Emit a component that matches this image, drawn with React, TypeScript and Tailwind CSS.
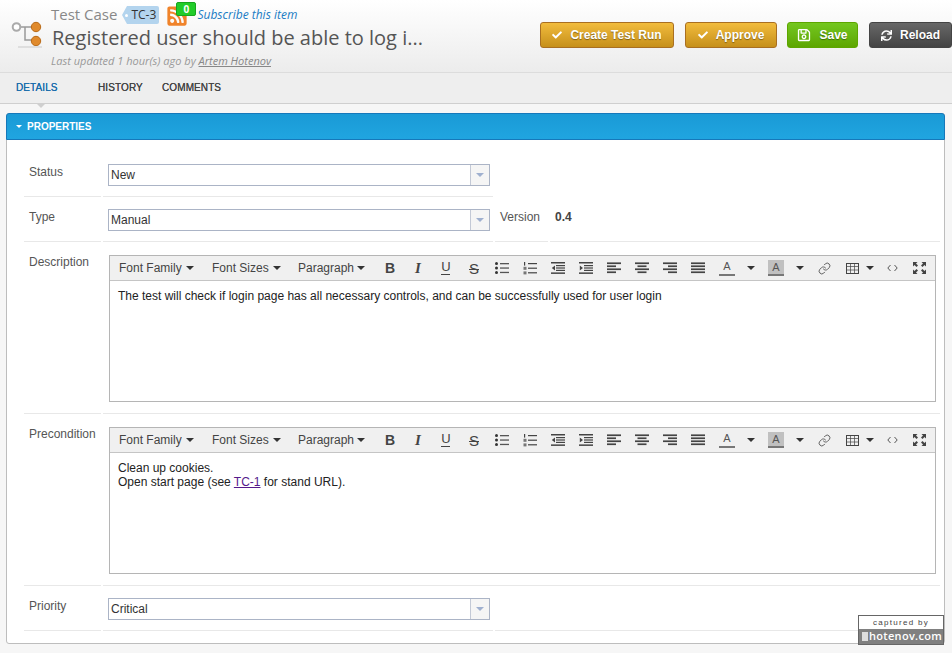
import { FaRssSquare, FaCheck, FaRegSave, FaSync } from "react-icons/fa";
import { LuLink } from "react-icons/lu";

const sans = "font-['Liberation_Sans',Arial,sans-serif]";
const open = "font-['Open_Sans',sans-serif]";

function Lines({ rows }: { rows: number[][] }) {
  // each row: x, width - a tiny text-alignment glyph
  return (
    <svg width="14" height="12" viewBox="0 0 14 12" fill="#444">
      {rows.map((r, i) => (
        <rect key={i} x={r[0]} y={i * (12 / rows.length) + 0.4} width={r[1]} height="1.7" />
      ))}
    </svg>
  );
}

function Caret({ className = "" }: { className?: string }) {
  return (
    <span
      className={`inline-block w-0 h-0 border-x-[4px] border-x-transparent border-t-[4px] border-t-[#333] ${className}`}
    />
  );
}

function Tool({ children, w = "w-[28px]" }: { children: React.ReactNode; w?: string }) {
  return <div className={`${w} flex items-center justify-center shrink-0`}>{children}</div>;
}

function Toolbar() {
  return (
    <div className={`flex items-center h-[25px] bg-[#f0f0f0] border-b border-[#c5c5c5] text-[12px] text-[#444] ${sans}`}>
      <div className="w-[101px] pl-[9px] flex items-center shrink-0">
        Font Family <Caret className="ml-[4px]" />
      </div>
      <div className="w-[87px] pl-[1px] flex items-center shrink-0">
        Font Sizes <Caret className="ml-[4px]" />
      </div>
      <div className="w-[78px] flex items-center shrink-0">
        Paragraph <Caret className="ml-[3px]" />
      </div>
      <Tool><span className="font-bold text-[14px] leading-none text-[#444]">B</span></Tool>
      <Tool><span className="italic font-bold text-[15px] leading-none font-['Liberation_Serif',serif] text-[#444]">I</span></Tool>
      <Tool>
        <span className="flex flex-col items-center text-[13px] leading-[12px]">
          U<span className="block w-[9px] h-[1px] bg-[#444] mt-[1px]" />
        </span>
      </Tool>
      <Tool><span className="line-through text-[15px] leading-none">S</span></Tool>
      <Tool>
        <svg width="14" height="12" viewBox="0 0 14 12" fill="#333">
          <circle cx="1.5" cy="1.5" r="1.5" />
          <circle cx="1.5" cy="6" r="1.5" />
          <circle cx="1.5" cy="10.5" r="1.5" />
          <rect x="5" y="1" width="9" height="1.3" fill="#555" />
          <rect x="5" y="5.4" width="9" height="1.3" fill="#555" />
          <rect x="5" y="9.8" width="9" height="1.3" fill="#555" />
        </svg>
      </Tool>
      <Tool>
        <svg width="14" height="13" viewBox="0 0 14 13" fill="#444">
          <rect x="1" y="0" width="1.2" height="3.6" />
          <rect x="0.5" y="4.8" width="3" height="3" fill="#777" />
          <rect x="0.5" y="9.4" width="3" height="3" fill="#777" />
          <rect x="5" y="1" width="9" height="1.2" />
          <rect x="5" y="5.6" width="9" height="1.2" />
          <rect x="5" y="10.2" width="9" height="1.2" />
        </svg>
      </Tool>
      <Tool>
        <svg width="14" height="12" viewBox="0 0 14 12" fill="#444">
          <rect x="0" y="0" width="14" height="1.5" />
          <rect x="5" y="3" width="9" height="1.2" />
          <rect x="5" y="5.4" width="9" height="1.2" />
          <rect x="5" y="7.8" width="9" height="1.2" />
          <rect x="0" y="10.4" width="14" height="1.5" />
          <path d="M4 3.6v4.8L0.8 6z" />
        </svg>
      </Tool>
      <Tool>
        <svg width="14" height="12" viewBox="0 0 14 12" fill="#444">
          <rect x="0" y="0" width="14" height="1.5" />
          <rect x="5" y="3" width="9" height="1.2" />
          <rect x="5" y="5.4" width="9" height="1.2" />
          <rect x="5" y="7.8" width="9" height="1.2" />
          <rect x="0" y="10.4" width="14" height="1.5" />
          <path d="M0.8 3.6v4.8L4 6z" />
        </svg>
      </Tool>
      <Tool><Lines rows={[[0, 14], [0, 9], [0, 14], [0, 9]]} /></Tool>
      <Tool><Lines rows={[[0, 14], [2.5, 9], [0, 14], [2.5, 9]]} /></Tool>
      <Tool><Lines rows={[[0, 14], [5, 9], [0, 14], [5, 9]]} /></Tool>
      <Tool><Lines rows={[[0, 14], [0, 14], [0, 14], [0, 14]]} /></Tool>
      <div className="w-[16px] ml-[7px] shrink-0 flex flex-col items-center text-[11px] leading-[13px] text-[#555]">
        A<span className="block w-[16px] h-[2px] bg-[#777] mt-[1px]" />
      </div>
      <Tool w="w-[32px]"><Caret /></Tool>
      <div className="w-[16px] h-[16px] shrink-0 ml-[1px] bg-[#c0c0c0] flex flex-col items-center text-[11px] leading-[14px] text-[#555]">
        A<span className="block w-[16px] h-[2px] bg-[#777]" />
      </div>
      <Tool w="w-[32px]"><Caret /></Tool>
      <Tool w="w-[16px]"><LuLink className="text-[13px] text-[#444]" strokeWidth={1.5} /></Tool>
      <div className="w-[12px] shrink-0" />
      <Tool w="w-[16px]">
        <svg width="13" height="11" viewBox="0 0 13 11" fill="none" stroke="#444" strokeWidth="1">
          <rect x="0.5" y="0.5" width="12" height="10" />
          <path d="M0.5 3.5h12M0.5 7h12M4.5 0.5v10M8.5 0.5v10" strokeOpacity="0.7" />
        </svg>
      </Tool>
      <Tool w="w-[20px]"><Caret /></Tool>
      <Tool w="w-[24px]">
        <svg width="11" height="8" viewBox="0 0 11 8" fill="none" stroke="#555" strokeWidth="1">
          <path d="M3.5 1L0.8 4l2.7 3M7.5 1l2.7 3-2.7 3" />
        </svg>
      </Tool>
      <div className="ml-[7px] w-[16px] shrink-0 flex justify-center">
        <svg width="13" height="12" viewBox="0 0 13 12" fill="#444">
          <path d="M0 0h4.5L3 1.5 5 3.5 3.5 5 1.5 3 0 4.5z" />
          <path d="M13 0H8.5L10 1.5 8 3.5 9.5 5l2-2L13 4.5z" />
          <path d="M0 12h4.5L3 10.5 5 8.5 3.5 7l-2 2L0 7.5z" />
          <path d="M13 12H8.5L10 10.5 8 8.5 9.5 7l2 2L13 7.5z" />
        </svg>
      </div>
    </div>
  );
}

function Editor({ children }: { children: React.ReactNode }) {
  return (
    <div className="h-[147px] border border-[#b5b5b5] bg-white">
      <Toolbar />
      <div className={`px-[8px] py-[8px] text-[12px] leading-[14px] text-[#222] ${sans}`}>{children}</div>
    </div>
  );
}

function Select({ value }: { value: string }) {
  return (
    <div className="w-[382px] h-[22px] border border-[#abb4c6] bg-white flex items-center">
      <span className="flex-1 pl-[2px] pb-[1px] text-[12px] text-[#333]">{value}</span>
      <span className="w-[19px] h-full border-l border-[#c3c9d6] bg-[#f5f5f5] flex items-center justify-center">
        <span className="w-0 h-0 border-x-[4px] border-x-transparent border-t-[4px] border-t-[#9fb0cf]" />
      </span>
    </div>
  );
}

function Row({
  label,
  height,
  labelPad = "pt-[13px]",
  children,
}: {
  label: string;
  height: string;
  labelPad?: string;
  children: React.ReactNode;
}) {
  return (
    <div className={`flex gap-[2px] ${height}`}>
      <div className={`w-[77px] shrink-0 border-b border-[#e8e8e8] pl-[5px] ${labelPad} text-[12px] text-[#555] leading-[14px]`}>
        {label}
      </div>
      {children}
    </div>
  );
}

function Btn({
  label,
  icon,
  className,
}: {
  label: string;
  icon: React.ReactNode;
  className: string;
}) {
  return (
    <div
      className={`h-[26px] rounded-[3px] border flex items-center justify-center gap-[8px] text-white font-bold text-[12px] [text-shadow:0_1px_1px_rgba(0,0,0,0.4)] shrink-0 ${className}`}
    >
      {icon}
      {label}
    </div>
  );
}

const yellow = "bg-gradient-to-b from-[#f2bc3c] to-[#c6901a] border-[#a96f21]";

export default function App() {
  return (
    <div className={`relative w-[952px] h-[653px] overflow-hidden bg-[#f6f6f6] ${sans}`}>
      {/* Header */}
      <div className="h-[73px] border-b border-[#dcdcdc] bg-gradient-to-b from-white to-[#ececec] flex justify-between">
        <div className="flex">
          <svg width="34" height="30" viewBox="0 0 34 30" className="ml-[10px] mt-[19px] shrink-0">
            <path d="M6 8h20M15 8v13h11" stroke="#999" strokeWidth="1.5" fill="none" />
            <circle cx="6.5" cy="8" r="3.8" fill="#fff" stroke="#aaa" strokeWidth="2" />
            <circle cx="26" cy="8" r="4.7" fill="#e08a2c" stroke="#b96a16" />
            <circle cx="26" cy="22" r="4.7" fill="#e08a2c" stroke="#b96a16" />
            <rect x="8" y="27" width="24" height="2" fill="#dedede" />
          </svg>
          <div className={`ml-[7px] ${open}`}>
            <div className="h-[25px] pt-[3px] flex items-center">
              <span className="text-[15px] text-[#888] leading-[19px]">Test Case</span>
              <span className="relative ml-[10px] mt-[2px] h-[18px] w-[32px] bg-[#b3d4ee] rounded-r-[2px] text-[12px] text-[#333] leading-[18px] pl-[4px]">
                TC-3
                <span className="absolute left-[-5px] top-0 w-0 h-0 border-y-[9px] border-y-transparent border-r-[5px] border-r-[#b3d4ee]" />
                <span className="absolute left-[-2px] top-[7.5px] w-[3px] h-[3px] rounded-full bg-white" />
              </span>
              <span className="relative ml-[8px] mt-[3px] w-[20px] h-[20px] flex items-center justify-center">
                <FaRssSquare className="text-[22px] text-[#f0832a]" />
                <span className="absolute left-[9px] top-[-4px] w-[20px] h-[14px] bg-[#22cc2a] border border-[#17a51f] rounded-[2px] text-white font-bold text-[10px] leading-[12px] text-center">
                  0
                </span>
              </span>
              <span className="ml-[10px] mt-[2px] text-[12px] italic text-[#1b7cc4]">Subscribe this item</span>
            </div>
            <div className="ml-[1px] text-[20px] leading-[26px] text-[#555] whitespace-nowrap">
              Registered user should be able to log i...
            </div>
            <div className="text-[11px] italic text-[#999] leading-[16px] mt-[2px]">
              Last updated 1 hour(s) ago by <span className="underline text-[#888]">Artem Hotenov</span>
            </div>
          </div>
        </div>
        <div className="flex items-start pt-[22px] shrink-0">
          <Btn label="Create Test Run" className={`w-[134px] ${yellow}`} icon={<FaCheck className="text-[10px]" />} />
          <Btn label="Approve" className={`w-[92px] ml-[11px] ${yellow}`} icon={<FaCheck className="text-[10px]" />} />
          <Btn
            label="Save"
            className="w-[71px] ml-[10px] bg-gradient-to-b from-[#74c71f] to-[#5da600] border-[#5da600]"
            icon={<FaRegSave className="text-[14px]" />}
          />
          <Btn
            label="Reload"
            className="w-[83px] ml-[11px] bg-gradient-to-b from-[#686868] to-[#444] border-[#444]"
            icon={<FaSync className="text-[11px]" />}
          />
        </div>
      </div>

      {/* Tabs */}
      <div className="relative h-[31px] pb-[2px] bg-[#eeeeee] border-b border-[#cfcfcf] flex items-center text-[10px] tracking-[0.1px] text-[#444] [text-shadow:0_0_0.6px_currentColor]">
        <span className="ml-[16px] w-[42px] text-[#1a6cab]">DETAILS</span>
        <span className="ml-[40px] w-[44px]">HISTORY</span>
        <span className="ml-[20px]">COMMENTS</span>
        <span className="absolute left-[36px] top-[30px] w-0 h-0 border-x-[5px] border-x-transparent border-t-[5px] border-t-[#cfcfcf]" />
      </div>

      {/* Properties panel */}
      <div className="ml-[6px] mt-[9px] w-[939px] h-[531px] rounded-[3px] border border-[#bdbdbd] bg-white">
        <div className="mx-[-1px] mt-[-1px] h-[27px] rounded-t-[3px] border border-[#1678ba] bg-gradient-to-b from-[#1a9ad6] to-[#20a5e0] flex items-center pl-[9px] text-white text-[10px] font-bold">
          <span className="w-0 h-0 border-x-[3px] border-x-transparent border-t-[3px] border-t-white mr-[5px]" />
          PROPERTIES
        </div>
        <div className="pt-[11px] pl-[17px] pr-[4px]">
          <Row label="Status" height="h-[46px]" labelPad="pt-[14px]">
            <div className="w-[390px] shrink-0 border-b border-[#e8e8e8] pl-[5px] pt-[13px]">
              <Select value="New" />
            </div>
          </Row>
          <Row label="Type" height="h-[45px]">
            <div className="w-[390px] shrink-0 border-b border-[#e8e8e8] pl-[5px] pt-[12px]">
              <Select value="Manual" />
            </div>
            <div className="w-[53px] shrink-0 border-b border-[#e8e8e8] pl-[5px] pt-[13px] text-[12px] text-[#555] leading-[14px]">
              Version
            </div>
            <div className="flex-1 border-b border-[#e8e8e8] pl-[5px] pt-[13px] text-[12px] font-bold text-[#444] leading-[14px]">
              0.4
            </div>
          </Row>
          <Row label="Description" height="h-[172px]">
            <div className="flex-1 border-b border-[#e8e8e8] pl-[6px] pr-[4px] pt-[13px]">
              <Editor>The test will check if login page has all necessary controls, and can be successfully used for user login</Editor>
            </div>
          </Row>
          <Row label="Precondition" height="h-[172px]">
            <div className="flex-1 border-b border-[#e8e8e8] pl-[6px] pr-[4px] pt-[13px]">
              <Editor>
                <div>Clean up cookies.</div>
                <div>
                  Open start page (see <span className="underline text-[#551a8b]">TC-1</span> for stand URL).
                </div>
              </Editor>
            </div>
          </Row>
          <Row label="Priority" height="h-[45px]">
            <div className="w-[390px] shrink-0 border-b border-[#e8e8e8] pl-[5px] pt-[12px]">
              <Select value="Critical" />
            </div>
            <div className="flex-1 border-b border-[#e8e8e8]" />
          </Row>
        </div>
      </div>

      {/* Capture watermark */}
      <div className="absolute left-[858px] top-[615px] w-[86px] h-[30px] border border-[#666] flex flex-col">
        <div className="h-[13px] bg-white text-[8px] leading-[13px] tracking-[1.3px] text-[#444] text-center">captured by</div>
        <div className={`h-[15px] bg-[#808080] flex items-center pl-[3px] text-[11px] font-semibold tracking-[0.3px] text-white ${open}`}>
          <span className="w-[6px] h-[9px] bg-[#ddd] mr-[1px]" />
          hotenov.com
        </div>
      </div>
    </div>
  );
}
